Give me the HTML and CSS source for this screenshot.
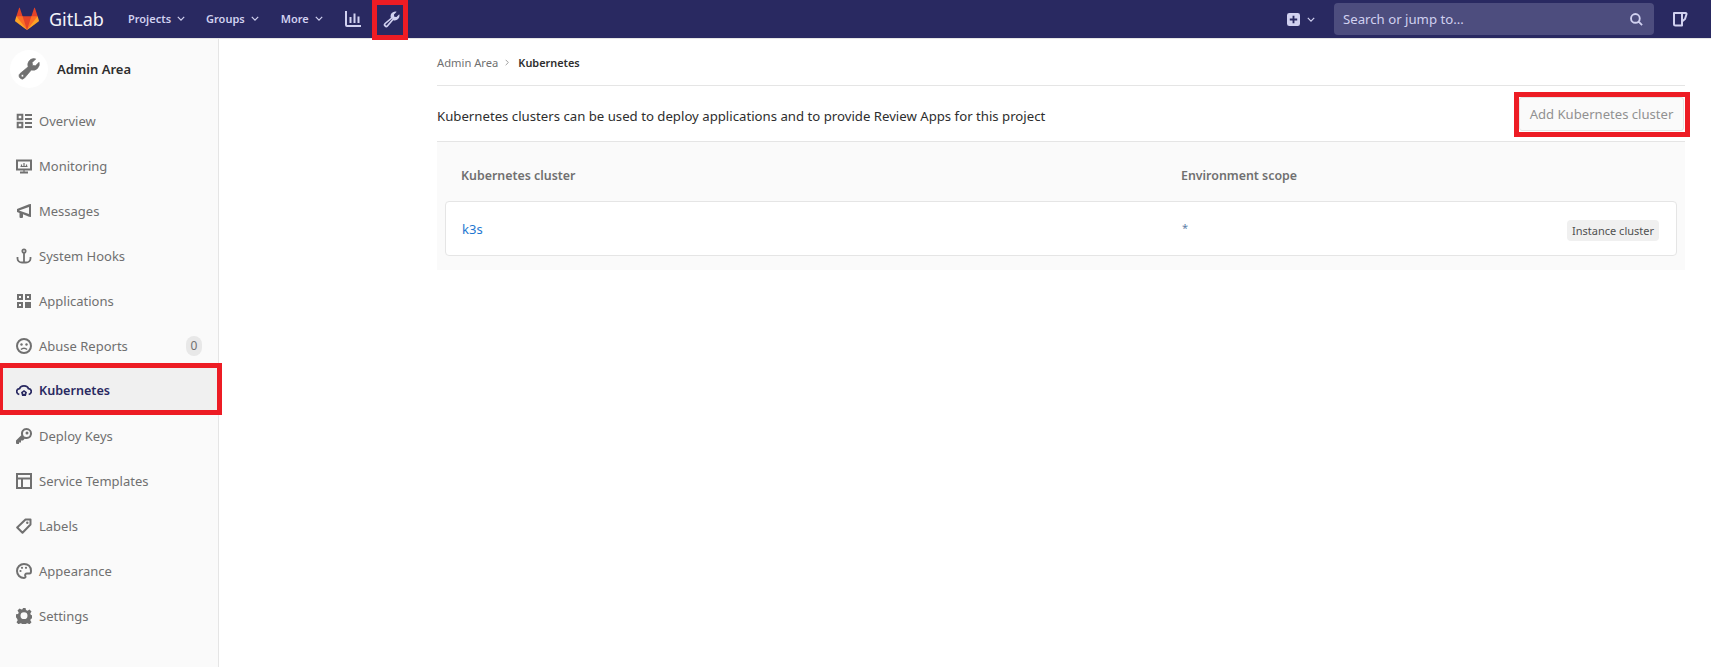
FILE: index.html
```html
<!DOCTYPE html>
<html lang="en">
<head>
<meta charset="utf-8">
<title>Kubernetes · Admin Area · GitLab</title>
<link rel="stylesheet" href="styles.css">
</head>
<body>
<header class="navbar">
  <a class="brand">
    <svg class="logo" viewBox="0 0 36 36"><path fill="#e24329" d="M2 14l9.38 9v-9l-4-12.28c-.205-.632-1.176-.632-1.38 0z"/><path fill="#e24329" d="M34 14l-9.38 9v-9l4-12.28c.205-.632 1.176-.632 1.38 0z"/><path fill="#e24329" d="M18 34.38 3 14h30z"/><path fill="#fc6d26" d="M18 34.38 11.38 14H2l4 11z"/><path fill="#fc6d26" d="M18 34.38 24.62 14H34l-4 11z"/><path fill="#fca326" d="M2 14L.1 20.16c-.18.565 0 1.2.5 1.56l17.42 12.66z"/><path fill="#fca326" d="M34 14l1.9 6.16c.18.565 0 1.2-.5 1.56L18 34.38z"/></svg>
    <span class="brand-name">GitLab</span>
  </a>
  <nav class="nav-links">
    <a class="nav-link">Projects<svg class="chev" viewBox="0 0 10 6"><path d="M1 1l4 4 4-4"/></svg></a>
    <a class="nav-link">Groups<svg class="chev" viewBox="0 0 10 6"><path d="M1 1l4 4 4-4"/></svg></a>
    <a class="nav-link">More<svg class="chev" viewBox="0 0 10 6"><path d="M1 1l4 4 4-4"/></svg></a>
    <a class="nav-icon chart"><svg class="ic-16" viewBox="0 0 16 16"><path class="nav-stroke" d="M1 0v14a1 1 0 0 0 1 1h14M5.500 6v6M9.500 2.500V12M13.500 5.500V12"/></svg></a>
    <a class="nav-icon wrench-link">
      <svg class="ic-17" viewBox="0 0 16 16"><path class="nav-fill" fill-rule="evenodd" d="M11.300.4a4.500 4.500 0 0 1 1.600.3L10.300 3.300l.3 2.100 2.100.3 2.600-2.600a4.500 4.500 0 0 1-5.600 5.600l-5 5.900a2.200 2.200 0 0 1-3.200 0 2.200 2.200 0 0 1 0-3.300l5.900-4.900A4.500 4.500 0 0 1 11.300.4zM8.700 7.100l-6.100 5.200a.8.8 0 0 0 0 1.100.8.8 0 0 0 1.100 0l5.200-6.100z"/></svg>
      <span class="mark mark-wrench"></span>
    </a>
  </nav>
  <div class="nav-right">
    <a class="new-menu">
      <svg class="ic-13" viewBox="0 0 14 14"><path class="nav-fill" fill-rule="evenodd" d="M2.500 0h9A2.500 2.500 0 0 1 14 2.500v9a2.500 2.500 0 0 1-2.500 2.500h-9A2.500 2.500 0 0 1 0 11.500v-9A2.500 2.500 0 0 1 2.500 0zM6 3v3H3v2h3v3h2V8h3V6H8V3z"/></svg>
      <svg class="chev" viewBox="0 0 10 6"><path d="M1 1l4 4 4-4"/></svg>
    </a>
    <div class="search">
      <span class="search-text">Search or jump to...</span>
      <svg class="ic-13" viewBox="0 0 14 14"><path class="search-stroke" d="M9.300 9.300L13 13M10.500 5.800a4.700 4.700 0 1 1-9.400 0 4.700 4.700 0 0 1 9.400 0z"/></svg>
    </div>
    <a class="todo"><svg class="ic-16" viewBox="0 0 16 16"><path class="nav-stroke wide" d="M2 2h8v12.500H3.500A1.500 1.500 0 0 1 2 13zM10 2h3.500a1 1 0 0 1 1 1.300L13 8l-3 2.500"/></svg></a>
  </div>
</header>

<div class="layout">
  <aside class="sidebar">
    <div class="side-head">
      <span class="avatar">
        <svg class="ic-22" viewBox="0 0 16 16"><path fill="#707070" stroke="#707070" stroke-width=".5" fill-rule="evenodd" d="M11.300.4a4.500 4.500 0 0 1 1.600.3L10.300 3.300l.3 2.100 2.100.3 2.600-2.600a4.500 4.500 0 0 1-5.600 5.600l-5 5.900a2.200 2.200 0 0 1-3.200 0 2.200 2.200 0 0 1 0-3.300l5.900-4.900A4.500 4.500 0 0 1 11.300.4zM3.200 12a.9.9 0 1 0 0 1.800.9.900 0 0 0 0-1.800z"/></svg>
      </span>
      <span class="side-title">Admin Area</span>
    </div>
    <ul class="side-list">
      <li class="side-item"><svg class="ic-16" viewBox="0 0 16 16"><path class="s" d="M1.700 1.700h4.600v4.600H1.700zM1.700 9.700h4.600v4.600H1.700z" stroke-width="2"/><path class="s" d="M9 2h7M9 6h7M9 10h7M9 14h7" stroke-width="2"/></svg><span>Overview</span></li>
      <li class="side-item"><svg class="ic-16" viewBox="0 0 16 16"><path class="s" d="M1 2.500h14v9H1zM4 14.500h8" stroke-width="2"/><path class="s" d="M4.500 8.500h7M5.500 8.500V6.500M8 8.500V5M10.500 8.500V6.500M8 11v3" stroke-width="1.200"/></svg><span>Monitoring</span></li>
      <li class="side-item"><svg class="ic-16" viewBox="0 0 16 16"><path class="f" fill-rule="evenodd" d="M15 1v13l-2-.3-6-2.500V14a1 1 0 0 1-1 1H4.500a1 1 0 0 1-1-1v-4.100L1 8.900V6.100L13 1.300zM13 4L3 7.400v.2l10 3.400z"/></svg><span>Messages</span></li>
      <li class="side-item"><svg class="ic-16" viewBox="0 0 16 16"><path class="s" d="M8 5v9.500M1.500 9v1.500a4.500 4 0 0 0 4.500 4h4a4.500 4 0 0 0 4.500-4V9" stroke-width="1.800"/><circle class="s" cx="8" cy="3" r="1.700" stroke-width="1.700"/></svg><span>System Hooks</span></li>
      <li class="side-item"><svg class="ic-16" viewBox="0 0 16 16"><path class="s" d="M2 2h4v4H2zM10 2h4v4h-4zM2 10h4v4H2z" stroke-width="2"/><path class="f" d="M9 9h6v6H9z"/></svg><span>Applications</span></li>
      <li class="side-item"><svg class="ic-16" viewBox="0 0 16 16"><circle class="s" cx="8" cy="8" r="7" stroke-width="2"/><circle class="f" cx="5.500" cy="6.500" r="1.200"/><circle class="f" cx="10.500" cy="6.500" r="1.200"/><path class="s" d="M5 11.500c1.500-1.700 4.500-1.700 6 0" stroke-width="1.500"/></svg><span>Abuse Reports</span><span class="count">0</span></li>
      <li class="side-item active">
        <svg class="ic-16" viewBox="0 0 16 16"><path class="s-a" d="M3.300 11.500C-.3 10.500 0 5.800 3.500 5.700 4.500 1.800 11.500 1.800 12.500 5.700c3.500.1 3.800 4.800.2 5.800" stroke-width="1.700"/><path class="f-a" fill-rule="evenodd" d="M8 7l3 2.200-1.100 3.800H6.100L5 9.200zM8 9a1 1 0 1 0 0 2 1 1 0 0 0 0-2z"/></svg><span class="active-label">Kubernetes</span>
        <span class="mark mark-side"></span>
      </li>
      <li class="side-item"><svg class="ic-16" viewBox="0 0 16 16"><path class="f" fill-rule="evenodd" d="M10.500 0a5.500 5.500 0 1 1-1.800 10.700L7 12.500H5v2H3V16H1a1 1 0 0 1-1-1v-2.400l5.300-5.300A5.500 5.500 0 0 1 10.500 0zm0 2a3.500 3.500 0 1 0 0 7 3.500 3.500 0 0 0 0-7zm.5 1.500a1.500 1.500 0 1 1 0 3 1.500 1.500 0 0 1 0-3z"/></svg><span>Deploy Keys</span></li>
      <li class="side-item"><svg class="ic-16" viewBox="0 0 16 16"><path class="s" d="M1 1h14v14H1zM1 5.500h14M6 5.500V15" stroke-width="2"/></svg><span>Service Templates</span></li>
      <li class="side-item"><svg class="ic-16" viewBox="0 0 16 16"><path class="s" d="M9.500 1.500h5v5l-8 8.300-5.300-5.300z" stroke-width="2" stroke-linejoin="round"/><circle class="f" cx="11.300" cy="4.700" r="1.200"/></svg><span>Labels</span></li>
      <li class="side-item"><svg class="ic-16" viewBox="0 0 16 16"><path class="s" d="M8 1a7 7 0 0 0 0 14c1.500 0 1.800-1 1.300-2-.6-1.300.2-2.500 1.700-2.500h2.500c1 0 1.500-.7 1.500-2.500C15 3.500 12 1 8 1z" stroke-width="2"/><circle class="f" cx="4.500" cy="8" r="1.100"/><circle class="f" cx="6" cy="4.800" r="1.100"/><circle class="f" cx="10" cy="4.800" r="1.100"/></svg><span>Appearance</span></li>
      <li class="side-item"><svg class="ic-16" viewBox="0 0 16 16"><path class="f" fill-rule="evenodd" d="M6.500 0h3l.5 2.200 1.500.7 2-1.100 2 2.100-1.200 2 .6 1.400 2.100.5v3l-2.100.5-.6 1.400 1.200 2-2 2.100-2-1.100-1.500.7-.5 2.200h-3l-.5-2.200-1.500-.7-2 1.100-2-2.100 1.200-2-.6-1.400L0 9.700v-3l2.100-.5.600-1.400-1.200-2 2-2.100 2 1.100 1.500-.7zM8 4.500a3.500 3.500 0 1 0 0 7 3.500 3.500 0 0 0 0-7z" transform="translate(0 -.200) scale(1 .98)"/></svg><span>Settings</span></li>
    </ul>
  </aside>

  <main class="content">
    <div class="breadcrumbs">
      <a class="crumb">Admin Area</a>
      <svg class="crumb-sep" viewBox="0 0 6 10"><path d="M1 1l4 4-4 4"/></svg>
      <strong class="crumb-current">Kubernetes</strong>
    </div>
    <div class="top-row">
      <p class="intro">Kubernetes clusters can be used to deploy applications and to provide Review Apps for this project</p>
      <a class="btn-add">Add Kubernetes cluster<span class="mark mark-btn"></span></a>
    </div>
    <section class="table-wrap">
      <div class="table-head">
        <div class="col-name">Kubernetes cluster</div>
        <div class="col-scope">Environment scope</div>
      </div>
      <div class="table-row">
        <a class="cell-name">k3s</a>
        <span class="cell-scope">*</span>
        <span class="badge">Instance cluster</span>
      </div>
    </section>
  </main>
</div>
</body>
</html>
```

FILE: styles.css
```css
* { box-sizing: border-box; }
html, body { margin: 0; height: 100%; }
body {
  font-family: "Noto Sans", "Open Sans", sans-serif;
  font-size: 13px;
  color: #2e2e2e;
  background: #fff;
  display: flex;
  flex-direction: column;
  overflow: hidden;
}
svg { display: block; flex: none; }
.ic-13 { width: 13px; height: 13px; }
.ic-16 { width: 16px; height: 16px; }
.ic-17 { width: 17px; height: 17px; }
.ic-22 { width: 22px; height: 22px; }
.nav-stroke { fill: none; stroke: #d1d1f0; stroke-width: 2; }
.nav-stroke.wide { stroke-linejoin: round; }
.nav-fill { fill: #d1d1f0; }
.search-stroke { fill: none; stroke: #d1d1f0; stroke-width: 2; }
.chev { width: 8px; height: 5px; fill: none; stroke: #d1d1f0; stroke-width: 1.500; }

.mark {
  position: absolute;
  border: 5px solid #ed1c24;
  pointer-events: none;
}
.mark-wrench { left: -11px; top: 0; width: 36px; height: 40px; }
.mark-side { left: -2px; top: -5px; width: 224px; height: 52px; }
.mark-btn { left: -6px; top: -6px; width: 176px; height: 45px; }

.navbar {
  height: 39px;
  flex: none;
  background: #292961;
  border-bottom: 1px solid #e5e5e5;
  display: flex;
  align-items: center;
  padding-left: 15px;
}
.brand { display: flex; align-items: center; gap: 10px; }
.logo { width: 24px; height: 24px; }
.brand-name { font-size: 18px; color: #f4f4fa; width: 51px; }
.nav-links { display: flex; align-items: center; margin-left: 28px; }
.nav-link {
  display: flex;
  align-items: center;
  gap: 6px;
  font-weight: 600;
  font-size: 11px;
  color: #d1d1f0;
  margin-right: 21px;
  padding-bottom: 1px;
}
.nav-link + .nav-link { margin-right: 22px; }
.nav-icon { display: flex; align-items: center; }
.wrench-link { position: relative; margin-left: 22px; height: 38px; }
.nav-right { margin-left: auto; display: flex; align-items: center; padding-right: 23px; }
.new-menu { display: flex; align-items: center; gap: 7px; margin-right: 19px; }
.search {
  width: 320px;
  height: 32px;
  background: #4d4d7e;
  border-radius: 4px;
  display: flex;
  align-items: center;
  justify-content: space-between;
  padding: 0 11px 0 9px;
  color: #d1d1f0;
  font-size: 13.2px;
  margin-right: 18px;
}

.layout { flex: 1; display: flex; min-height: 0; }
.sidebar {
  width: 219px;
  flex: none;
  background: #fafafa;
  border-right: 1px solid #e5e5e5;
}
.side-head { display: flex; align-items: center; height: 59px; padding-left: 10px; gap: 9px; }
.avatar {
  width: 38px;
  height: 38px;
  border-radius: 50%;
  background: #fff;
  display: flex;
  align-items: center;
  justify-content: center;
}
.side-title { font-weight: 600; font-size: 13px; color: #2e2e2e; }
.side-list { list-style: none; margin: 0; padding: 0; }
.side-item {
  position: relative;
  height: 45px;
  display: flex;
  align-items: center;
  gap: 7px;
  padding-left: 16px;
  color: #707070;
}
.s { fill: none; stroke: #707070; }
.f { fill: #707070; }
.s-a { fill: none; stroke: #292961; }
.f-a { fill: #292961; }
.side-item.active {
  background: linear-gradient(#f0f0f0, #f0f0f0) 0 0 / 100% 42px no-repeat;
  color: #292961;
}
.active-label { font-weight: 600; font-size: 12.6px; }
.count {
  margin-left: auto;
  margin-right: 16px;
  width: 16px;
  height: 20px;
  border-radius: 8px;
  background: #e8e8e8;
  font-size: 12px;
  display: flex;
  align-items: center;
  justify-content: center;
}

.content { flex: 1; padding: 0 26px 0 218px; }
.breadcrumbs {
  height: 47px;
  display: flex;
  align-items: center;
  border-bottom: 1px solid #e5e5e5;
  font-size: 11.2px;
  color: #707070;
}
.crumb-sep { width: 4px; height: 7px; margin: 0 9px 0 7px; fill: none; stroke: #999; stroke-width: 1.400; }
.crumb-current { font-weight: 600; font-size: 10.9px; color: #2e2e2e; }
.top-row {
  height: 55px;
  display: flex;
  align-items: flex-start;
  justify-content: space-between;
}
.intro { margin: 21px 0 0; color: #2e2e2e; font-size: 13.2px; }
.btn-add {
  position: relative;
  width: 165px;
  height: 34px;
  margin: 11px 1px 0 0;
  display: flex;
  align-items: center;
  justify-content: center;
  background: #fafafa;
  border: 1px solid #e5e5e5;
  border-radius: 3px;
  color: #919191;
  font-size: 13.100px;
}
.table-wrap {
  background: #fafafa;
  border-top: 1px solid #e5e5e5;
  height: 129px;
  padding: 0 8px;
}
.table-head {
  height: 59px;
  display: flex;
  align-items: center;
  padding: 8px 0 0 16px;
  font-weight: 600;
  font-size: 12.4px;
  color: #707070;
}
.col-name { width: 720px; }
.table-row {
  height: 55px;
  background: #fff;
  border: 1px solid #e5e5e5;
  border-radius: 4px;
  display: flex;
  align-items: center;
  padding: 0 17px 0 16px;
}
.cell-name { width: 720px; color: #1f78d1; }
.cell-scope { color: #5f7fa8; font-size: 11px; margin-top: -2px; }
.badge {
  margin-left: auto;
  padding: 0 5px;
  height: 21px;
  margin-top: 4px;
  border-radius: 4px;
  background: #f0f0f0;
  font-size: 11px;
  color: #505050;
  display: flex;
  align-items: center;
}
```
